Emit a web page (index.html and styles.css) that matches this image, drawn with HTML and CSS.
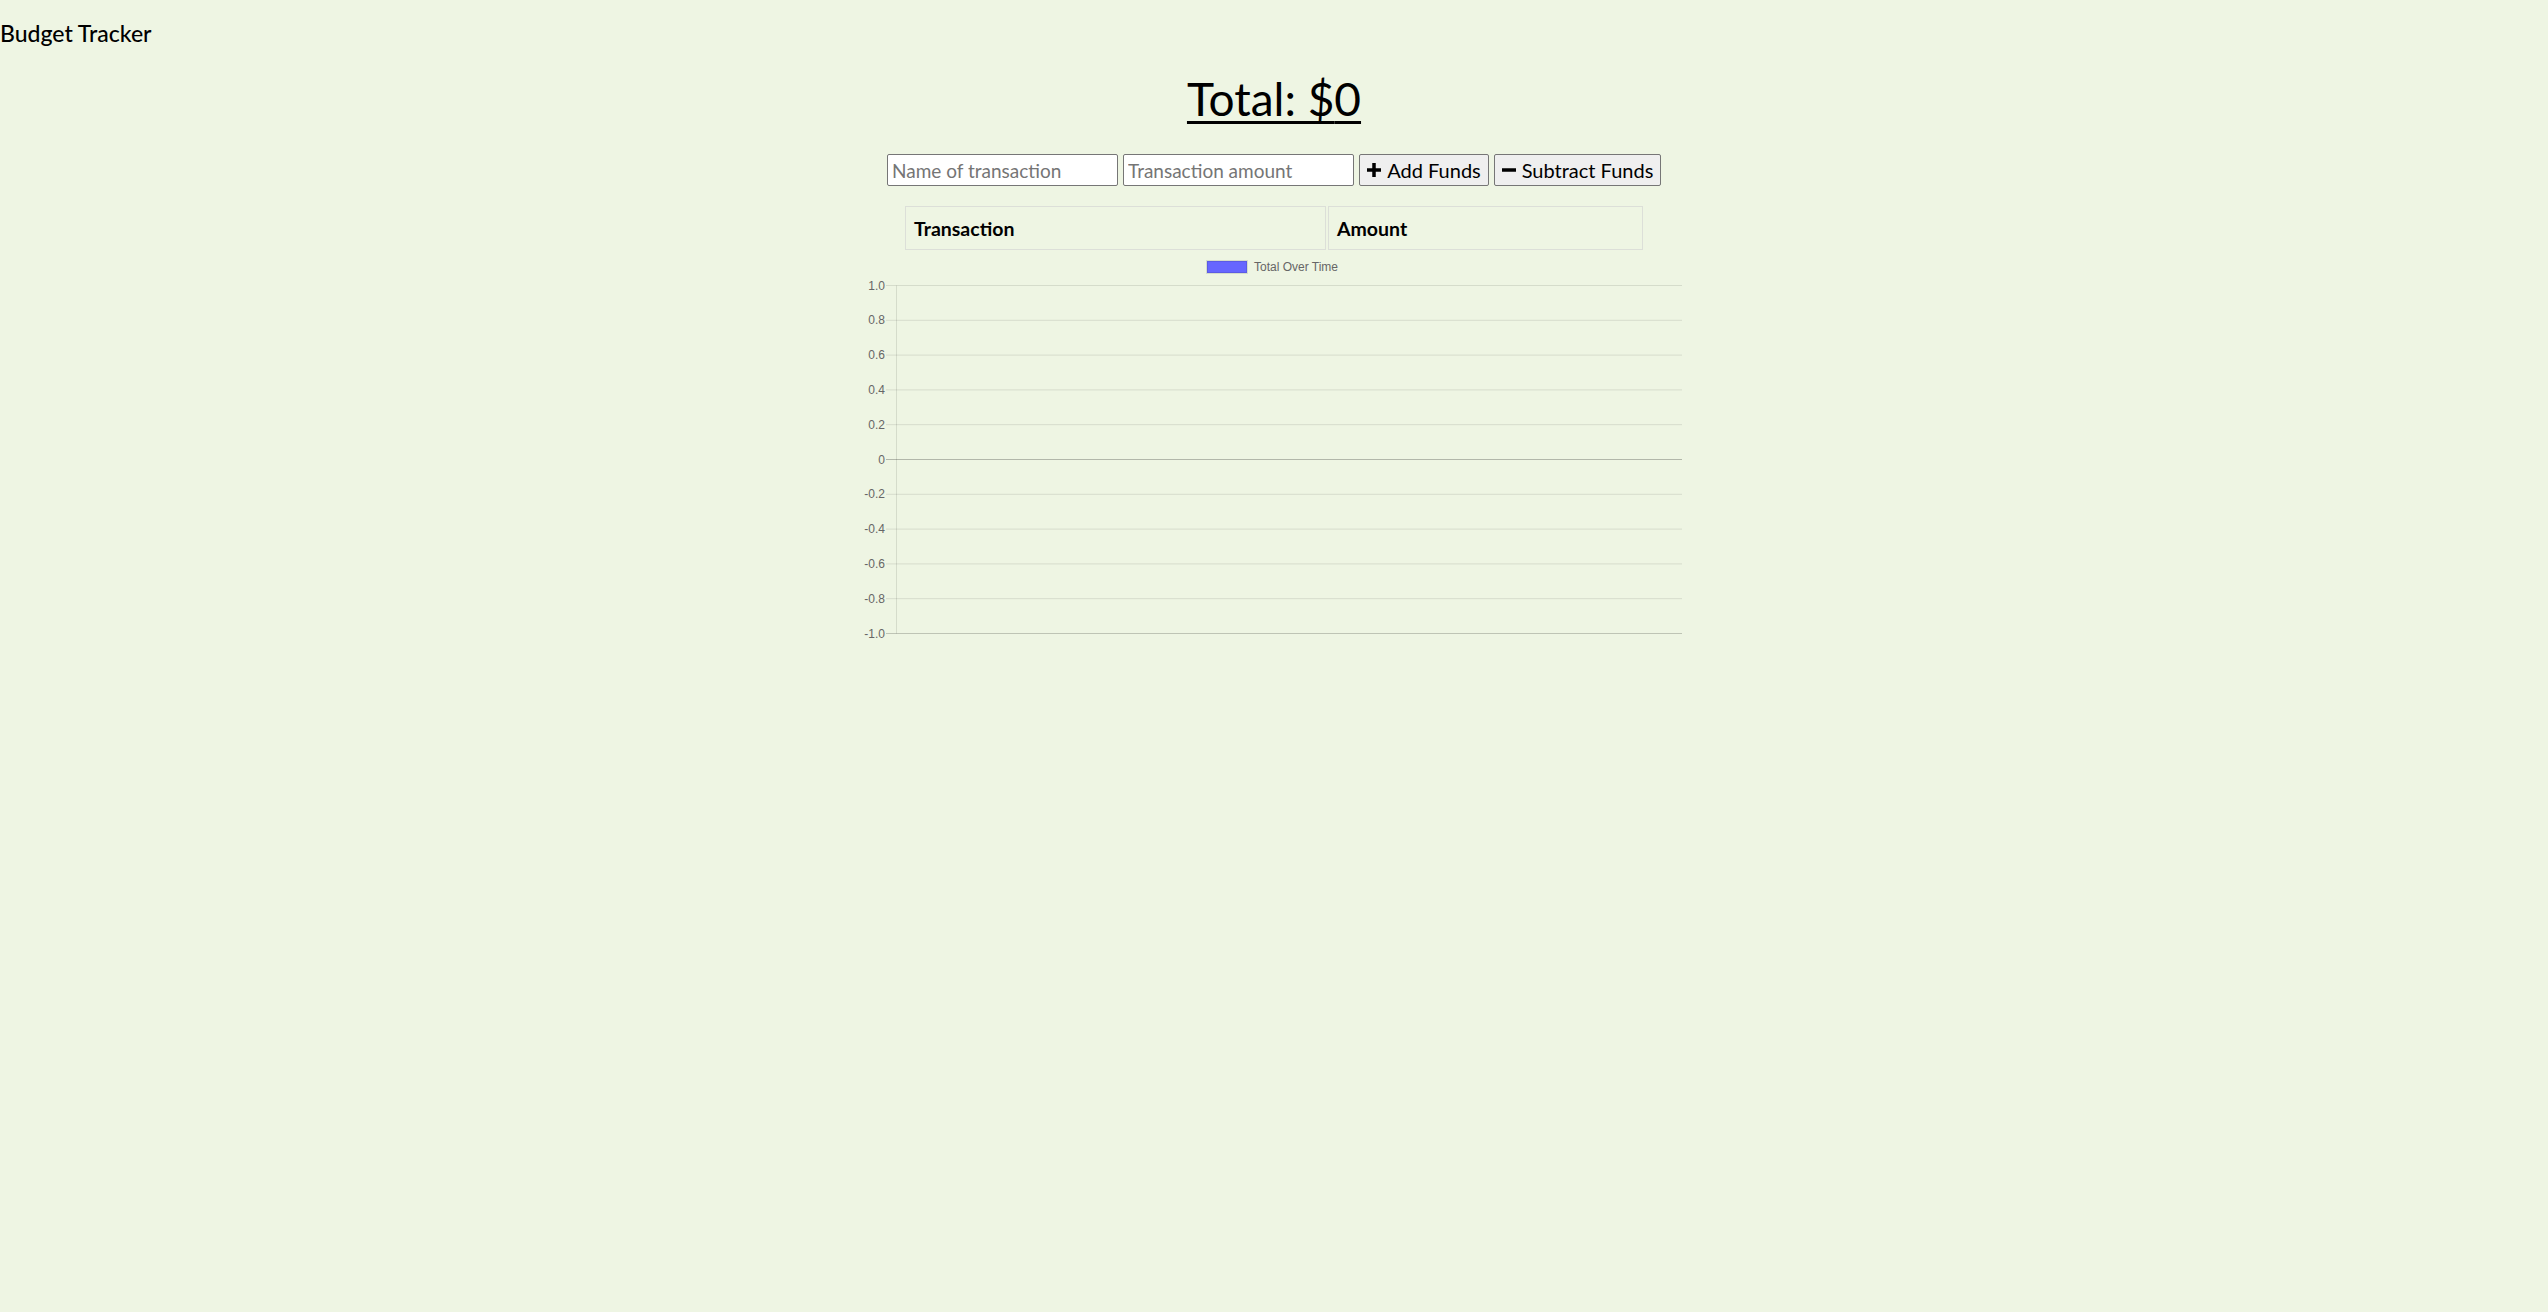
FILE: index.html
```html
<!DOCTYPE html>
<html lang="en">
<head>
<meta charset="utf-8">
<title>Budget Tracker</title>
<link rel="stylesheet" href="styles.css">
</head>
<body>
  <header class="topbar">Budget Tracker</header>
  <main class="wrapper">
    <h1 class="total">Total: $<span class="total-amount">0</span></h1>
    <form class="form" onsubmit="return false">
      <input class="field" type="text" placeholder="Name of transaction">
      <input class="field" type="number" placeholder="Transaction amount">
      <button class="btn btn-add" type="button"><svg class="icon" viewBox="0 0 12 12" width="14" height="14"><path d="M4.5 0h3v4.5H12v3H7.5V12h-3V7.5H0v-3h4.5z" fill="#000"/></svg><span>Add Funds</span></button>
      <button class="btn btn-sub" type="button"><svg class="icon" viewBox="0 0 12 12" width="14" height="14"><path d="M0 4.5h12v3H0z" fill="#000"/></svg><span>Subtract Funds</span></button>
    </form>
    <table class="table">
      <thead>
        <tr><th class="col-name">Transaction</th><th class="col-amt">Amount</th></tr>
      </thead>
      <tbody></tbody>
    </table>
    <div class="chart">
      <svg class="chart-svg" width="820" height="410" viewBox="0 0 820 410">
        <rect x="343" y="9" width="40" height="12" fill="#6666ff" stroke="rgba(0,0,0,0.1)" stroke-width="2"/>
        <text x="390" y="19" class="legend-text">Total Over Time</text>
        <g class="grid">
          <line x1="22" y1="33.5" x2="818" y2="33.5"/>
          <line x1="22" y1="68.3" x2="818" y2="68.3"/>
          <line x1="22" y1="103.1" x2="818" y2="103.1"/>
          <line x1="22" y1="137.9" x2="818" y2="137.9"/>
          <line x1="22" y1="172.7" x2="818" y2="172.7"/>
          <line x1="22" y1="242.3" x2="818" y2="242.3"/>
          <line x1="22" y1="277.1" x2="818" y2="277.1"/>
          <line x1="22" y1="311.9" x2="818" y2="311.9"/>
          <line x1="22" y1="346.7" x2="818" y2="346.7"/>
          <line x1="32.5" y1="33.5" x2="32.5" y2="381.5"/>
        </g>
        <line class="zero" x1="22" y1="207.5" x2="818" y2="207.5"/>
        <line class="axis" x1="22" y1="381.5" x2="818" y2="381.5"/>
        <g class="ticks">
          <text x="21" y="37.5">1.0</text>
          <text x="21" y="72.3">0.8</text>
          <text x="21" y="107.1">0.6</text>
          <text x="21" y="141.9">0.4</text>
          <text x="21" y="176.7">0.2</text>
          <text x="21" y="211.5">0</text>
          <text x="21" y="246.3">-0.2</text>
          <text x="21" y="281.1">-0.4</text>
          <text x="21" y="315.9">-0.6</text>
          <text x="21" y="350.7">-0.8</text>
          <text x="21" y="385.5">-1.0</text>
        </g>
      </svg>
    </div>
  </main>
</body>
</html>
```

FILE: styles.css
```css
html, body {
  margin: 0;
  padding: 0;
}
body {
  background: #eef5e3;
  font-family: Lato, "Noto Sans", sans-serif;
  color: #000;
}
.topbar {
  font-size: 23px;
  font-weight: 500;
  padding: 20px 0 0 0;
  height: 52px;
  box-sizing: border-box;
  line-height: 26px;
}
.wrapper {
  display: flex;
  flex-direction: column;
  align-items: center;
}
.total {
  margin: 19px 0 0 0;
  font-size: 46px;
  font-weight: 400;
  line-height: 56px;
  text-decoration: underline;
  text-decoration-thickness: 3px;
  text-underline-offset: 5px;
}
.form {
  margin-top: 27px;
  display: flex;
  gap: 5px;
  align-items: center;
}
.field {
  width: 231px;
  height: 32px;
  box-sizing: border-box;
  border: 1px solid #767676;
  border-radius: 2px;
  background: #fff;
  font-family: inherit;
  font-size: 19px;
  padding: 0 4px;
  -moz-appearance: textfield;
}
.field::-webkit-outer-spin-button,
.field::-webkit-inner-spin-button {
  -webkit-appearance: none;
  margin: 0;
}
.field::placeholder {
  color: #757575;
}
.btn {
  height: 32px;
  box-sizing: border-box;
  border: 1px solid #767676;
  border-radius: 2px;
  background: #efefef;
  font-family: inherit;
  font-size: 20px;
  color: #000;
  padding: 0;
  display: flex;
  align-items: center;
  justify-content: center;
  gap: 6px;
  white-space: nowrap;
  flex-shrink: 0;
}
.btn-add {
  width: 130px;
}
.btn-sub {
  width: 167px;
}
.icon {
  display: block;
  flex-shrink: 0;
}
.table {
  margin-top: 18px;
  width: 742px;
  border-spacing: 2px;
}
.table th {
  border: 1px solid #dcdfd8;
  height: 44px;
  box-sizing: border-box;
  text-align: left;
  padding: 0 8px;
  font-size: 19.5px;
  font-weight: 700;
}
.col-name {
  width: 421px;
}
.chart {
  width: 820px;
  height: 410px;
}
.chart-svg {
  display: block;
}
.legend-text {
  font-family: "Liberation Sans", Arial, sans-serif;
  font-size: 12px;
  fill: #666;
}
.grid line {
  stroke: rgba(0, 0, 0, 0.1);
  stroke-width: 1;
}
.zero {
  stroke: rgba(0, 0, 0, 0.25);
  stroke-width: 1;
}
.axis {
  stroke: rgba(0, 0, 0, 0.2);
  stroke-width: 1;
}
.ticks text {
  font-family: "Liberation Sans", Arial, sans-serif;
  font-size: 12px;
  fill: #666;
  text-anchor: end;
}
```
